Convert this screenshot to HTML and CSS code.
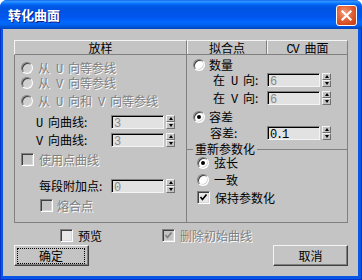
FILE: index.html
```html
<!DOCTYPE html>
<html>
<head>
<meta charset="utf-8">
<link rel="stylesheet" href="styles.css">
</head>
<body>
<div class="window">
  <div class="titlebar">
    <span class="title">转化曲面</span>
    <span class="close"><svg width="13" height="13" viewBox="0 0 13 13"><path d="M2.5 2.5 L10.5 10.5 M10.5 2.5 L2.5 10.5" stroke="#fff" stroke-width="2.2" stroke-linecap="square"/></svg></span>
  </div>
  <div class="frame">
    <div class="client">
      <div class="panels">
        <div class="panel left">
          <div class="header">放样</div>
          <div class="body">
            <div class="row dis rl"><i class="radio"></i><span class="txt">从<span class="l"> U </span>向等参线</span></div>
            <div class="row dis rl"><i class="radio"></i><span class="txt">从<span class="l"> V </span>向等参线</span></div>
            <div class="row dis rl"><i class="radio"></i><span class="txt">从<span class="l"> U </span>向和<span class="l"> V </span>向等参线</span></div>
            <div class="row sl"><span class="lab w75"><span class="l">U </span>向曲线:</span><span class="edit dis-edit"><span class="l">3</span></span><span class="arr"><b class="up"></b><b class="dn"></b></span></div>
            <div class="row sl"><span class="lab w75"><span class="l">V </span>向曲线:</span><span class="edit dis-edit"><span class="l">3</span></span><span class="arr"><b class="up"></b><b class="dn"></b></span></div>
            <div class="row dis cl"><i class="check"></i><span class="txt">使用点曲线</span></div>
            <div class="row sl2"><span class="lab w72">每段附加点:</span><span class="edit dis-edit"><span class="l">0</span></span><span class="arr"><b class="up"></b><b class="dn"></b></span></div>
            <div class="row dis cl2"><i class="check"></i><span class="txt t4">熔合点</span></div>
          </div>
        </div>
        <div class="panel right">
          <div class="tabs"><div class="tab t1">拟合点</div><div class="tab t2"><span class="l">CV </span>曲面</div></div>
          <div class="body">
            <div class="row rr"><i class="radio en"></i><span class="txt t4">数量</span></div>
            <div class="row su"><span class="lab w54">在<span class="l"> U </span>向:</span><span class="edit dis-edit"><span class="l">6</span></span><span class="arr"><b class="up"></b><b class="dn"></b></span></div>
            <div class="row sv"><span class="lab w54">在<span class="l"> V </span>向:</span><span class="edit dis-edit"><span class="l">6</span></span><span class="arr"><b class="up"></b><b class="dn"></b></span></div>
            <div class="row rr2"><i class="radio en on"></i><span class="txt t4">容差</span></div>
            <div class="row st"><span class="lab w57">容差:</span><span class="edit"><span class="l">0.1</span></span><span class="arr"><b class="up"></b><b class="dn"></b></span></div>
            <div class="row ghead"><span class="gline short"></span><span class="glabel">重新参数化</span><span class="gline"></span></div>
            <div class="row gr"><i class="radio en on"></i><span class="txt">弦长</span></div>
            <div class="row gr2"><i class="radio en"></i><span class="txt">一致</span></div>
            <div class="row gc"><i class="check en"><svg width="9" height="9" viewBox="0 0 9 9"><polyline points="1.5,4 3.5,6.5 7.5,1.5" fill="none" stroke="#000" stroke-width="1.7"/></svg></i><span class="txt">保持参数化</span></div>
          </div>
        </div>
      </div>
      <div class="options">
        <div class="opt"><i class="check en"></i><span class="txt">预览</span></div>
        <div class="opt dis o2"><i class="check"><svg width="9" height="9" viewBox="0 0 9 9"><polyline points="1.5,4 3.5,6.5 7.5,1.5" fill="none" stroke="#808080" stroke-width="1.7"/></svg></i><span class="txt">删除初始曲线</span></div>
      </div>
      <div class="buttons">
        <div class="btn default"><span class="focus">确定</span></div>
        <div class="btn">取消</div>
      </div>
    </div>
  </div>
</div>
</body>
</html>
```

FILE: styles.css
```css
* { box-sizing: border-box; }
html, body { margin: 0; padding: 0; }
body {
  width: 362px; height: 280px; overflow: hidden; background: #fff;
  font-family: "Noto Sans CJK SC", sans-serif; font-size: 12px; line-height: 14px; color: #000;
}
i, b { display: block; font-style: normal; }
.l { font-family: "Liberation Mono", monospace; letter-spacing: -1.2px; white-space: pre; }

.window {
  width: 362px; height: 280px; display: flex; flex-direction: column;
  background: #0852E4; border-radius: 7px 7px 0 0; overflow: hidden;
}
.titlebar {
  height: 29px; flex: none; display: flex; align-items: center; justify-content: space-between;
  padding: 0 5px 0 8px;
  background: linear-gradient(to bottom, #0058EE 0px, #3A93FF 1px, #288EFF 2px, #127DFF 3px, #036FFC 4px, #0262EE 5px, #0057E5 7px, #0054E3 9px, #0055EB 16px, #005BF5 19px, #026AFE 22px, #0062EF 25px, #0052D6 27px, #0046C0 29px);
}
.title { color: #fff; font-weight: bold; font-size: 13px; line-height: 16px; text-shadow: 1px 1px #0C1D86; margin-top: 1px; }
.close {
  width: 21px; height: 21px; border: 1px solid #fff; border-radius: 3px; margin-top: 2px;
  background: radial-gradient(circle at 40% 35%, #F3A07F 0%, #E5663C 40%, #D4481C 75%, #C23A10 100%);
  display: grid; place-items: center;
}
.frame {
  flex: 1; display: flex; padding: 0 4px 4px 3px;
  background: #0855E6;
  box-shadow: inset 1px 0 #0733C8, inset -1px -1px #0733C8;
}
.client {
  flex: 1; background: #C4C4C4; padding: 11px 10px 0 11px;
  display: flex; flex-direction: column;
}
.panels { display: flex; height: 183px; flex: none; }
.panel { display: flex; flex-direction: column; }
.panel.left { width: 173px; }
.panel.right { width: 162px; margin-left: -1px; }
.header {
  height: 15px; flex: none; text-align: center; line-height: 13px;
  border-top: 1px solid #F4F4F4; border-left: 1px solid #F4F4F4;
  border-right: 1px solid #808080; border-bottom: 1px solid #808080;
}
.body {
  flex: 1; display: flex; flex-direction: column;
  border: 1px solid #808080; border-top: none;
}
.left .body { padding-top: 6px; }
.right .body { padding-top: 3px; }
.tabs { display: flex; height: 15px; flex: none; padding-left: 1px; border-bottom: 1px solid #808080; }
.tab {
  height: 14px; line-height: 13px; text-align: center;
  border-top: 1px solid #F4F4F4; border-left: 1px solid #F4F4F4; border-right: 1px solid #808080;
}
.t1 { width: 80px; }
.t2 { width: 81px; }

.row { display: flex; align-items: center; height: 14px; flex: none; line-height: 12px; }
.dis { color: #808080; text-shadow: 1px 1px #fff; }
.txt { margin-left: 5px; white-space: nowrap; display: inline-block; height: 12px; line-height: 12px; }
.t4 { margin-left: 4px; }
.lab { white-space: nowrap; display: inline-block; height: 12px; line-height: 12px; }
.w75 { width: 75px; }
.w72 { width: 72px; }
.w54 { width: 54px; }
.w57 { width: 57px; }

/* left rows */
.rl { padding-left: 6px; }
.rl + .rl { margin-top: 1px; }
.rl + .rl + .rl { margin-top: 4px; }
.sl { padding-left: 21px; margin-top: 7px; }
.sl + .sl { margin-top: 4px; }
.cl { padding-left: 6px; margin-top: 6px; height: 13px; }
.sl2 { padding-left: 24px; margin-top: 13px; }
.cl2 { padding-left: 25px; margin-top: 6px; height: 13px; }

/* right rows */
.rr { padding-left: 6px; }
.su { padding-left: 26px; margin-top: 1px; }
.sv { padding-left: 26px; margin-top: 4px; }
.rr2 { padding-left: 6px; margin-top: 5px; }
.st { padding-left: 23px; margin-top: 2px; }
.ghead { margin-top: 2px; }
.gline { flex: 1; height: 1px; background: #808080; }
.gline.short { flex: none; width: 6px; }
.glabel { padding: 0 2px; white-space: nowrap; display: inline-block; height: 12px; line-height: 12px; }
.gr { padding-left: 10px; margin-top: 0; }
.gr2 { padding-left: 10px; margin-top: 3px; }
.gc { padding-left: 10px; margin-top: 4px; height: 13px; }

/* controls */
.radio {
  width: 12px; height: 12px; border-radius: 50%; flex: none;
  border: 1px solid; border-color: #808080 #FFFFFF #FFFFFF #808080;
  box-shadow: inset 1px 1px 0 #404040, inset -1px -1px 0 #D8D8D8;
  background: #D0D0D0; display: grid; place-items: center;
}
.radio.en { background: #FFFFFF; }
.radio.on::after { content: ""; width: 4px; height: 4px; border-radius: 50%; background: #000; }
.check {
  width: 13px; height: 13px; flex: none;
  border: 1px solid; border-color: #808080 #FFFFFF #FFFFFF #808080;
  box-shadow: inset 1px 1px 0 #404040, inset -1px -1px 0 #D8D8D8;
  background: #C4C4C4; display: grid; place-items: center;
}
.check.en { background: #E8E8E8; }
.edit {
  width: 53px; height: 14px; flex: none; padding-left: 2px;
  border: 1px solid; border-color: #808080 #F4F4F4 #F4F4F4 #808080;
  box-shadow: inset 1px 1px 0 #000;
  background: #E2E2E2; line-height: 12px; color: #000; text-shadow: none;
}
.dis-edit { color: #888; }
.arr { width: 9px; height: 14px; margin-left: 2px; display: flex; flex-direction: column; flex: none; }
.arr b {
  flex: 1; display: grid; place-items: center; background: #C4C4C4;
  border: 1px solid; border-color: #F4F4F4 #707070 #707070 #F4F4F4;
}
.arr b::after {
  content: ""; width: 0; height: 0;
  border-left: 2.5px solid transparent; border-right: 2.5px solid transparent;
}
.arr .up::after { border-bottom: 3px solid #000; }
.arr .dn::after { border-top: 3px solid #000; }

.options { display: flex; align-items: center; height: 13px; margin-top: 6px; padding-left: 46px; flex: none; }
.opt { display: flex; align-items: center; line-height: 12px; }
.o2 { margin-left: 60px; }
.buttons { display: flex; justify-content: space-between; margin-top: 3px; flex: none; }
.btn {
  width: 75px; height: 21px; display: grid; place-items: center; line-height: 14px;
  border: 1px solid; border-color: #F4F4F4 #404040 #404040 #F4F4F4;
  box-shadow: inset -1px -1px 0 #808080;
}
.btn.default { padding: 2px 3px 3px 2px; }
.focus {
  width: 100%; height: 100%; display: grid; place-items: center; border: 1px dotted #000;
}
```
